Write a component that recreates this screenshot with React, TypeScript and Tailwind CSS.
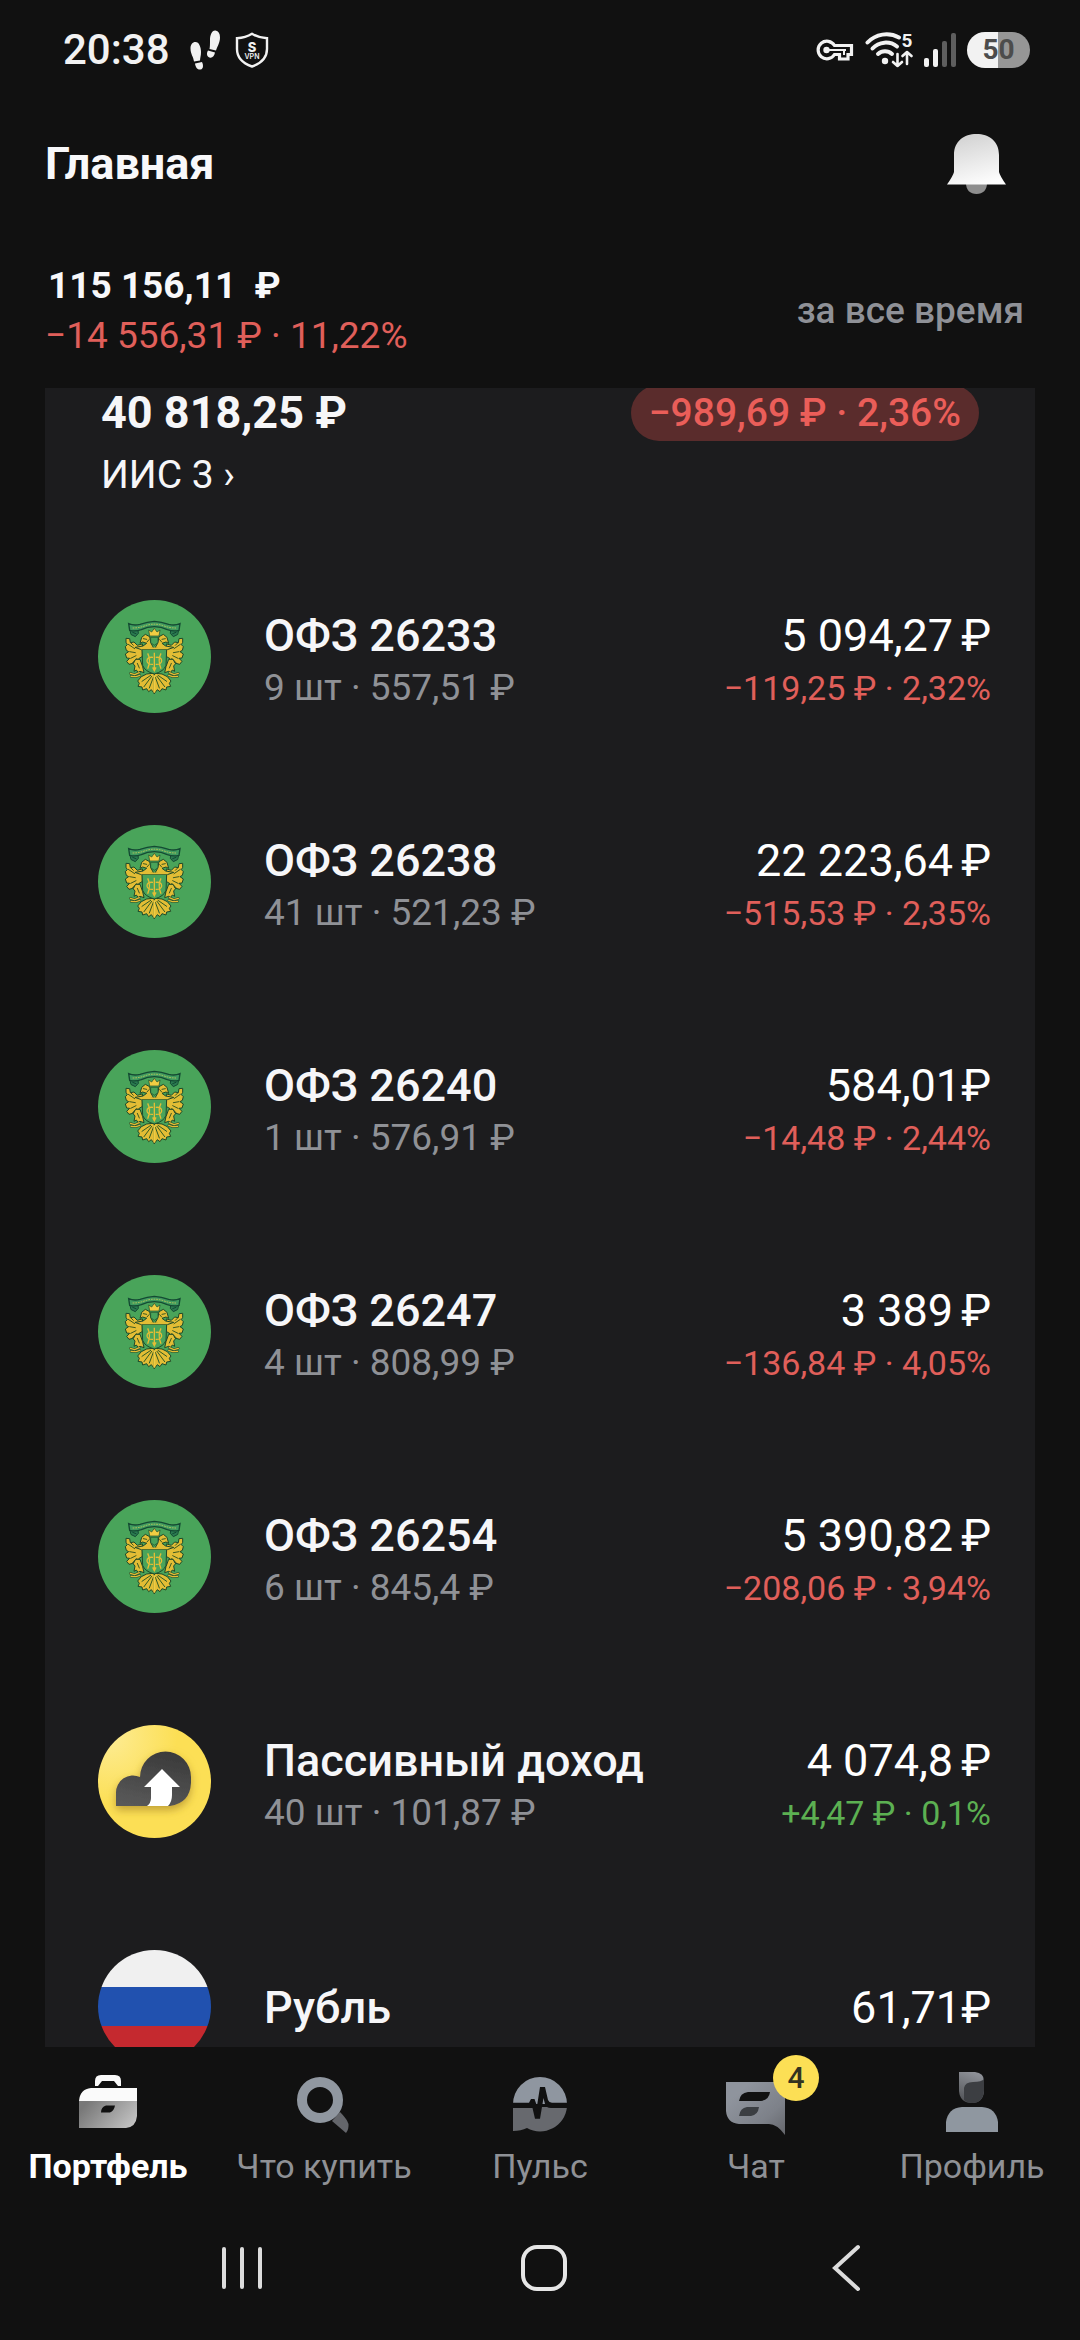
import React from "react";
import clsx from "clsx";

type Holding = {
  name: string;
  info?: string;
  value: string;
  change?: string;
  up?: boolean;
  icon: React.FC;
};

/* ---------- Asset icons ---------- */

// One half of the coat of arms, the other one is mirrored
const EmblemHalf: React.FC = () => (
  <g strokeLinecap="round" strokeLinejoin="round">
    {/* wing */}
    <path
      d="M132 132 L118 136 L108 126 L97 128 L95 116 L84 115 L84 127 L88 134 L82 140 L85 151 L92 155 L82 162 L86 174 L95 175 L86 184 L93 193 L104 190 L112 186 L122 176 L132 170 Z"
      fill="#e3bd35"
      stroke="#1f4a2a"
      strokeWidth="3"
    />
    <path
      d="M91 133 L110 146 M95 155 L112 158 M98 175 L114 167 M104 188 L117 175 M99 129 L106 136"
      fill="none"
      stroke="#3c5a22"
      strokeWidth="3"
    />
    {/* neck and head */}
    <path
      d="M112 142 L135 138 L146 130 L134 126 L126 130 L131 112 L142 103 L155 110 L159 130 L167 144 L132 149 Z"
      fill="#e3bd35"
      stroke="#1f4a2a"
      strokeWidth="3"
    />
    <path d="M136 116 L146 118 M147 126 L153 119" stroke="#3c5a22" strokeWidth="3" />
    {/* leg */}
    <path
      d="M114 178 L126 178 L134 200 L138 218 L126 214 L121 218 L115 210 L108 214 L111 198 L106 192 Z"
      fill="#e3bd35"
      stroke="#1f4a2a"
      strokeWidth="3"
    />
    <path d="M118 190 L124 204" stroke="#3c5a22" strokeWidth="3" />
    <path d="M97 220 L110 224 L124 218 M99 229 L114 230 L126 226" fill="none" stroke="#1f4a2a" strokeWidth="7" />
    <path d="M97 220 L110 224 L124 218 M99 229 L114 230 L126 226" fill="none" stroke="#e3bd35" strokeWidth="4" />
    {/* tail */}
    <path
      d="M164 220 L146 222 L130 230 L119 243 L124 250 L120 259 L132 261 L134 270 L146 266 L152 275 L160 269 L169 281 V222 Z"
      fill="#e3bd35"
      stroke="#1f4a2a"
      strokeWidth="3"
    />
    <path
      d="M158 226 L132 244 M161 229 L138 260 M166 232 L154 264"
      fill="none"
      stroke="#2f5a26"
      strokeWidth="3"
    />
    {/* ribbon end */}
    <path d="M97 90 L120 90 L121 100 L112 110 L100 104 Z" fill="#2a7a50" stroke="#144a33" strokeWidth="3" />
    <path d="M104 97 L114 101" stroke="#144a33" strokeWidth="3" />
    {/* monogram */}
    <path
      d="M150 160 Q160 180 150 206 M165 172 Q146 170 147 184 Q149 194 165 193"
      fill="none"
      stroke="#e3bd35"
      strokeWidth="4"
    />
  </g>
);

const BondIcon: React.FC = () => (
  <svg viewBox="0 0 339 339" className="size-full">
    <rect width="339" height="339" fill="#49a45a" />
    <EmblemHalf />
    <g transform="translate(338 0) scale(-1 1)">
      <EmblemHalf />
    </g>
    {/* shield */}
    <path
      d="M132 148 L206 148 L204 196 Q198 214 169 222 Q140 214 134 196 Z"
      fill="#49a45a"
      stroke="#1f4a2a"
      strokeWidth="3"
    />
    <path d="M128 145 H210" stroke="#e3bd35" strokeWidth="5" />
    <path
      d="M149 160 Q160 180 149 206 M189 160 Q178 180 189 206 M165 172 Q147 170 147 183 Q149 194 165 193 M173 172 Q191 170 191 183 Q189 194 173 193"
      fill="none"
      stroke="#e3bd35"
      strokeWidth="4"
    />
    <path d="M169 158 V210 M164 202 L169 212 L174 202" fill="none" stroke="#e3bd35" strokeWidth="4" />
    <path d="M169 226 V278" stroke="#f0cd43" strokeWidth="5" />
    {/* crown */}
    <path d="M155 108 L152 90 L161 96 L169 85 L177 96 L186 90 L183 108 Z" fill="#f0cd43" stroke="#1f4a2a" strokeWidth="2" />
    <path d="M158 112 H180 V128 L169 136 L158 128 Z" fill="#49a45a" stroke="#1f4a2a" strokeWidth="2" />
    {/* ribbon */}
    <path
      d="M92 71 Q108 78 126 73 Q148 66 169 64 Q190 66 212 73 Q230 78 246 71 L243 91 Q226 95 208 89 Q190 80 169 80 Q148 80 130 89 Q112 95 95 91 Z"
      fill="#3f9a5f"
      stroke="#144a33"
      strokeWidth="4"
    />
    <path d="M104 84 Q124 84 142 77 Q169 68 196 77 Q214 84 234 84" fill="none" stroke="#b9c65a" strokeWidth="3" strokeDasharray="5 3" />
  </svg>
);

const CloudIcon: React.FC = () => (
  <svg viewBox="0 0 113 113" className="size-full">
    <defs>
      <radialGradient id="cloud-bg" cx="0.1" cy="0.1" r="0.6">
        <stop offset="0" stopColor="#fdec94" />
        <stop offset="1" stopColor="#fcdf55" />
      </radialGradient>
      <linearGradient id="cloud-fill" x1="0.3" y1="1" x2="0.6" y2="0">
        <stop offset="0" stopColor="#585858" />
        <stop offset="1" stopColor="#3b3b3b" />
      </linearGradient>
      <filter id="cloud-shadow" x="-20%" y="-20%" width="140%" height="150%">
        <feDropShadow dx="0" dy="4" stdDeviation="4" floodColor="#a8862a" floodOpacity="0.7" />
      </filter>
    </defs>
    <rect width="113" height="113" fill="url(#cloud-bg)" />
    <path
      d="M18 81 V68 A17 17 0 0 1 42 52 A25 25 0 0 1 93 52 V58 Q92 78 72 81 Z"
      fill="url(#cloud-fill)"
      filter="url(#cloud-shadow)"
    />
    <path d="M64 44 L82 62 H74 V70 Q74 77 70 81 H49 Q53 78 53 73 V62 H46 Z" fill="#fff" />
  </svg>
);

const RubleIcon: React.FC = () => (
  <svg viewBox="0 0 113 113" className="size-full">
    <rect width="113" height="37" fill="#f0f0f0" />
    <rect y="37" width="113" height="39" fill="#2151af" />
    <rect y="76" width="113" height="37" fill="#c5292f" />
  </svg>
);

/* ---------- Status bar icons ---------- */

const StepsIcon: React.FC = () => (
  <svg viewBox="0 0 30 40" className="h-10 w-[30px]" fill="#f2f2f2">
    <path d="M5.500 12 C9 12 11 17 11 22 C11 26 10 28 10 30.500 L4 31.500 C3.500 27 0.500 24 0.500 18.500 C0.500 14.500 2.500 12 5.500 12 Z" />
    <path d="M5 33.500 L12 32 C13.500 35 13.500 39 10.500 39.500 C7 40 5.500 37 5 33.500 Z" />
    <path d="M25.500 0.500 C22 0 20 5 20 10 C20 14 20 17 19.500 19 L26 20.500 C27 17 30 13 30 7.500 C30 3.500 28.500 1 25.500 0.500 Z" />
    <path d="M18 20.500 L25 22.500 C24.500 26 22 28.500 19.500 27.500 C16.500 26.500 16.500 23 18 20.500 Z" />
  </svg>
);

const VpnIcon: React.FC = () => (
  <svg viewBox="0 0 34 36" className="h-9 w-[34px]">
    <path
      d="M17 1.800 C22 5 27 6 32 6.200 V17 C32 25 27 31 17 34.500 C7 31 2 25 2 17 V6.200 C7 6 12 5 17 1.800 Z"
      fill="none"
      stroke="#f2f2f2"
      strokeWidth="2.400"
    />
    <text x="17" y="20" textAnchor="middle" fontSize="13" fontWeight="800" fill="#f2f2f2" fontFamily="Inter, sans-serif">
      S
    </text>
    <text x="17" y="27" textAnchor="middle" fontSize="7" fontWeight="600" fill="#f2f2f2" fontFamily="Inter, sans-serif">
      VPN
    </text>
  </svg>
);

const KeyIcon: React.FC = () => (
  <svg viewBox="0 0 38 24" className="h-6 w-[38px]" fill="none" stroke="#f2f2f2" strokeWidth="3.200">
    <path d="M18.500 7.500 A8.800 8.800 0 1 0 18.500 16.500 H23.500 V21 H32 V16.500 H35.500 V7.500 Z" />
    <circle cx="10.500" cy="12" r="3.200" fill="#f2f2f2" stroke="none" />
    <path d="M11 12 H30 M28 12 V17" strokeWidth="2" />
  </svg>
);

const WifiIcon: React.FC = () => (
  <svg viewBox="0 -6 48 48" className="size-12">
    <g fill="none" stroke="#f2f2f2" strokeWidth="4" strokeLinecap="round">
      <path d="M2.500 10.500 A26 26 0 0 1 34 5.500" />
      <path d="M7.500 16.500 A18 18 0 0 1 32 14.500" />
      <path d="M13 22 A10.500 10.500 0 0 1 27 22" />
    </g>
    <circle cx="20" cy="29" r="3.200" fill="#f2f2f2" />
    <g fill="none" stroke="#f2f2f2" strokeWidth="2.600" strokeLinecap="round" strokeLinejoin="round">
      <path d="M32.500 22 V34 M28 30 L32.500 34 L37 30" />
      <path d="M42 32 V20 M37.500 24 L42 20 L46.500 24" />
    </g>
    <text x="42" y="15" textAnchor="middle" fontSize="19" fontWeight="700" fill="#f2f2f2" stroke="#111111" strokeWidth="3" paintOrder="stroke">
      5
    </text>
  </svg>
);

const SignalIcon: React.FC = () => (
  <svg viewBox="0 0 32 36" className="h-9 w-8">
    <rect x="0" y="26" width="5" height="9" rx="2" fill="#f2f2f2" />
    <rect x="9" y="17" width="5" height="18" rx="2" fill="#f2f2f2" />
    <rect x="18" y="9" width="5" height="26" rx="2" fill="#5e5e5e" />
    <rect x="27" y="1" width="5" height="34" rx="2" fill="#5e5e5e" />
  </svg>
);

const BellIcon: React.FC = () => (
  <svg viewBox="0 0 60 62" className="h-[62px] w-[60px]">
    <defs>
      <linearGradient id="bell" x1="0.3" y1="0" x2="0.6" y2="1">
        <stop offset="0" stopColor="#d2d2d2" />
        <stop offset="1" stopColor="#fdfdfd" />
      </linearGradient>
    </defs>
    <path d="M20 50 H41 C41 57 37 61 30.500 61 C24 61 20 57 20 50 Z" fill="#8e8e8e" />
    <path
      d="M8 22 C8 8 18 1 30.500 1 C43 1 53 8 53 22 V39 Q54 43 60 51.500 H1 Q7 43 8 39 Z"
      fill="url(#bell)"
    />
  </svg>
);

/* ---------- Tab bar icons, all on a 72px grid ---------- */

const BriefcaseIcon: React.FC = () => (
  <svg viewBox="0 0 72 72" className="size-[72px]">
    <defs>
      <linearGradient id="case" x1="0" y1="0.4" x2="1" y2="0.8">
        <stop offset="0" stopColor="#787878" />
        <stop offset="1" stopColor="#c4c4c4" />
      </linearGradient>
    </defs>
    <path d="M23 20 V15 Q23 9 29 9 H43 Q49 9 49 15 V20 H46 L42 15 H30 L26 20 Z" fill="#fafafa" />
    <path d="M7 35 Q8 23 19 22 H65 V35 Z" fill="#fafafa" />
    <path d="M7 35 H65 V50 Q64 61 54 62 H7 Z M34 39.500 Q29 41 29 46.500 H38 Q42 45 43 39.500 Z" fill="url(#case)" fillRule="evenodd" />
  </svg>
);

const SearchIcon: React.FC = () => (
  <svg viewBox="0 0 72 72" className="size-[72px]">
    <path d="M44 55 L52 46 Q59 53 60.500 58 Q61 63 58 67 Z" fill="#64666b" />
    <circle cx="32" cy="34" r="18" fill="none" stroke="#9097a0" strokeWidth="10" />
  </svg>
);

const PulseIcon: React.FC = () => (
  <svg viewBox="0 0 72 72" className="size-[72px]">
    <path d="M9 38 A27 27 0 0 1 63 38 Z" fill="#8f96a0" />
    <path d="M9 41 H63 A27 27 0 0 1 23 62 Q17 65 9 65 Z" fill="#67696e" />
    <path
      d="M8 36.700 H25 L27 33 H30.500 L33 40 L36 21 H41 L44 34 Q45 36.700 48 36.700 H64 V42 H47 Q42 42 41 38 L39.500 32 L36 52.700 H31 L28.500 42 H8 Z"
      fill="#111111"
    />
  </svg>
);

const ChatIcon: React.FC = () => (
  <svg viewBox="0 0 72 72" className="size-[72px]">
    <defs>
      <linearGradient id="chat" x1="0.2" y1="0.2" x2="1" y2="1">
        <stop offset="0" stopColor="#8f949d" />
        <stop offset="0.6" stopColor="#7d8189" />
        <stop offset="1" stopColor="#64666b" />
      </linearGradient>
    </defs>
    <path d="M6 16 H65 V69 Q57 58 49 58 H19 Q7 57 6 45 Z" fill="url(#chat)" />
    <path d="M28 26 H50 Q49 34 41 35 H19 Q20 27 28 26 Z" fill="#111111" />
    <path d="M27 41 H39 Q38 49 31 50 H19 Q20 42 27 41 Z" fill="#3b3e42" />
  </svg>
);

const ProfileIcon: React.FC = () => (
  <svg viewBox="0 0 72 72" className="size-[72px]">
    <defs>
      <linearGradient id="hair" x1="0.5" y1="0" x2="0.2" y2="1">
        <stop offset="0" stopColor="#8d9096" />
        <stop offset="1" stopColor="#505256" />
      </linearGradient>
    </defs>
    <path d="M23 6 H39 Q48 7 48 15 V25 Q47 37 36 37 Q24 37 23 25 Z" fill="url(#hair)" />
    <path d="M28 36 V22 Q29 16 37 16 Q46 16 48 13 V25 Q47 37 36 37 Q31 37 28 34 Z" fill="#3c3e42" />
    <path d="M10 66 V56 Q12 42 26 41 H46 Q60 42 62 56 V66 Z" fill="#8f97a0" />
  </svg>
);

/* ---------- Data ---------- */

const holdings: Holding[] = [
  { name: "ОФЗ 26233", info: "9 шт · 557,51 ₽", value: "5 094,27", change: "−119,25 ₽ · 2,32%", icon: BondIcon },
  { name: "ОФЗ 26238", info: "41 шт · 521,23 ₽", value: "22 223,64", change: "−515,53 ₽ · 2,35%", icon: BondIcon },
  { name: "ОФЗ 26240", info: "1 шт · 576,91 ₽", value: "584,01", change: "−14,48 ₽ · 2,44%", icon: BondIcon },
  { name: "ОФЗ 26247", info: "4 шт · 808,99 ₽", value: "3 389", change: "−136,84 ₽ · 4,05%", icon: BondIcon },
  { name: "ОФЗ 26254", info: "6 шт · 845,4 ₽", value: "5 390,82", change: "−208,06 ₽ · 3,94%", icon: BondIcon },
  { name: "Пассивный доход", info: "40 шт · 101,87 ₽", value: "4 074,8", change: "+4,47 ₽ · 0,1%", up: true, icon: CloudIcon },
  { name: "Рубль", value: "61,71", icon: RubleIcon },
];

const tabs = [
  { label: "Портфель", icon: BriefcaseIcon, active: true },
  { label: "Что купить", icon: SearchIcon },
  { label: "Пульс", icon: PulseIcon },
  { label: "Чат", icon: ChatIcon, badge: 4 },
  { label: "Профиль", icon: ProfileIcon },
];

const HoldingRow: React.FC<{ item: Holding }> = ({ item }) => {
  const Icon = item.icon;
  // "1" already leaves room on its right side
  const tight = item.value.endsWith("1");
  return (
    <li className="flex h-[225px] items-center pr-11 pl-[53px]">
      <div className="size-[113px] shrink-0 overflow-hidden rounded-full">
        <Icon />
      </div>
      <div className="ml-[53px] flex-1 pt-[2px]">
        <div className="text-[45px] leading-[60px] font-medium text-[#f6f6f8]">{item.name}</div>
        {item.info && <div className="text-[37px] leading-[44px] text-[#8f9196]">{item.info}</div>}
      </div>
      <div className="pt-[2px] text-right">
        <div className={clsx("flex justify-end text-[45px] leading-[60px] text-white", !tight && "gap-2")}>
          <span>{item.value}</span>
          <span>₽</span>
        </div>
        {item.change && (
          <div className={clsx("text-[34px] leading-[44px]", item.up ? "text-[#5cb052]" : "text-[#e05f5a]")}>
            {item.change}
          </div>
        )}
      </div>
    </li>
  );
};

const App: React.FC = () => {
  return (
    <div className="flex h-screen flex-col bg-[#111111] font-[Roboto,sans-serif] text-white">
      {/* Status bar */}
      <div className="flex h-[100px] shrink-0 items-center justify-between pr-[50px] pl-[63px] text-[#f2f2f2]">
        <div className="flex items-center">
          <span className="text-[42px] leading-[48px] font-medium">20:38</span>
          <div className="ml-5 flex items-center gap-[15px]">
            <StepsIcon />
            <VpnIcon />
          </div>
        </div>
        <div className="flex items-center gap-[11px]">
          <KeyIcon />
          <WifiIcon />
          <SignalIcon />
          <div className="flex h-9 w-[63px] items-center justify-center rounded-full bg-linear-to-r from-[#f2f2f2] from-50% to-[#969696] to-50% text-[28px] leading-9 font-bold text-[#4c4c4c]">
            50
          </div>
        </div>
      </div>

      {/* Title */}
      <header className="flex h-32 shrink-0 items-center justify-between pr-[74px] pl-[45px]">
        <h1 className="text-[45px] leading-[56px] font-bold text-[#f8f8fa]">Главная</h1>
        <button type="button" aria-label="Уведомления">
          <BellIcon />
        </button>
      </header>

      {/* Total */}
      <div className="flex shrink-0 items-center justify-between pt-[33px] pr-14 pb-[27px] pl-[45px]">
        <div className="leading-[50px]">
          <div className="pl-[3px] text-[37px] font-bold whitespace-pre text-[#f8f8fa]">{"115 156,11  ₽"}</div>
          <div className="text-[37px] text-[#e05f5a]">−14 556,31 ₽ · 11,22%</div>
        </div>
        <button type="button" className="text-[37px] leading-[50px] font-medium text-[#8f9197]">
          за все время
        </button>
      </div>

      {/* Portfolio card, scrolled a little */}
      <main className="mx-[45px] min-h-0 flex-1 overflow-hidden bg-[#1c1c1e]">
        <section className="-mt-[3px]">
          <div className="flex h-[159px] justify-between pr-14 pl-14">
            <div className="pt-1">
              <div className="text-[45px] leading-[48px] font-bold text-[#f6f6f8]">40 818,25 ₽</div>
              <a href="#account" className="block pt-2 text-[39px] leading-[60px] text-[#f6f6f8]">
                ИИС 3 ›
              </a>
            </div>
            <div className="h-14 rounded-full bg-[#5a2c2c] px-[18px] text-[39px] leading-[56px] font-medium text-[#ea5e59]">
              −989,69 ₽ · 2,36%
            </div>
          </div>
          <ul>
            {holdings.map((item) => (
              <HoldingRow key={item.name} item={item} />
            ))}
          </ul>
        </section>
      </main>

      {/* Tab bar */}
      <nav className="grid shrink-0 grid-cols-5 pt-[19px]">
        {tabs.map(({ label, icon: Icon, active, badge }) => (
          <a
            key={label}
            href="#tab"
            className={clsx(
              "flex flex-col items-center gap-[6px] text-[34px] leading-[44px] whitespace-nowrap",
              active ? "font-bold text-white" : "text-[#8f9196]"
            )}
          >
            <span className="relative">
              <Icon />
              {badge && (
                <span className="absolute -top-[11px] left-[53px] flex size-[46px] items-center justify-center rounded-full bg-[#fcdf55] text-[30px] leading-none font-medium text-[#333320]">
                  {badge}
                </span>
              )}
            </span>
            {label}
          </a>
        ))}
      </nav>

      {/* System navigation */}
      <div className="grid h-[152px] shrink-0 grid-cols-3 items-center justify-items-center pt-2 pr-[82px] pl-[91px]">
        <button type="button" aria-label="Недавние">
          <svg viewBox="0 0 48 48" className="size-12" stroke="#dcdcdc" strokeWidth="4" strokeLinecap="round">
            <path d="M6 5 V43 M24 5 V43 M42 5 V43" />
          </svg>
        </button>
        <button type="button" aria-label="Домой">
          <svg viewBox="0 0 48 48" className="size-12" fill="none" stroke="#e6e6e6" strokeWidth="4">
            <rect x="3" y="3" width="42" height="42" rx="14" />
          </svg>
        </button>
        <button type="button" aria-label="Назад">
          <svg viewBox="0 0 48 48" className="size-12" fill="none" stroke="#dcdcdc" strokeWidth="4" strokeLinecap="round">
            <path d="M35 3 L12 24 L35 45" />
          </svg>
        </button>
      </div>
    </div>
  );
};

export default App;
